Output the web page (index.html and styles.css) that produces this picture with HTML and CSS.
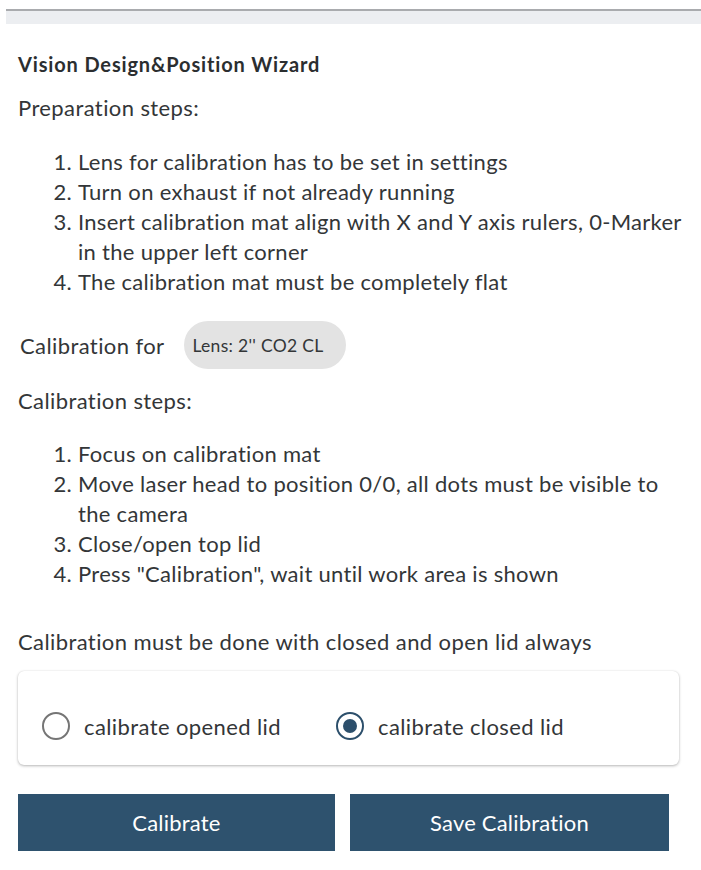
FILE: index.html
```html
<!DOCTYPE html>
<html>
<head>
<meta charset="utf-8">
<link rel="stylesheet" href="styles.css">
</head>
<body>
<div class="frame">
  <div class="band"></div>
  <div class="content">
    <h1 class="title">Vision Design&amp;Position Wizard</h1>
    <p class="section">Preparation steps:</p>
    <ol class="steps steps-prep">
      <li>Lens for calibration has to be set in settings</li>
      <li>Turn on exhaust if not already running</li>
      <li>Insert calibration mat align with X and Y axis rulers, <span class="nowrap">0-Marker</span> in the upper left corner</li>
      <li>The calibration mat must be completely flat</li>
    </ol>
    <div class="for-row">
      <span class="for-label">Calibration for</span>
      <span class="pill">Lens: 2'' CO2 CL</span>
    </div>
    <p class="section section-cal">Calibration steps:</p>
    <ol class="steps steps-cal">
      <li>Focus on calibration mat</li>
      <li>Move laser head to position 0/0, all dots must be visible to the camera</li>
      <li>Close/open top lid</li>
      <li>Press "Calibration", wait until work area is shown</li>
    </ol>
    <p class="note">Calibration must be done with closed and open lid always</p>
    <div class="card">
      <label class="radio">
        <span class="circle"></span>
        <span class="radio-text">calibrate opened lid</span>
      </label>
      <label class="radio radio-checked">
        <span class="circle"><span class="dot"></span></span>
        <span class="radio-text">calibrate closed lid</span>
      </label>
    </div>
    <div class="buttons">
      <button class="btn">Calibrate</button>
      <button class="btn">Save Calibration</button>
    </div>
  </div>
</div>
</body>
</html>
```
FILE: styles.css
```css
html, body {
  margin: 0;
  padding: 0;
  background: #ffffff;
}
body {
  font-family: "Lato", "Noto Sans", sans-serif;
  color: #333638;
  font-size: 22px;
  letter-spacing: 0.4px;
}
.frame {
  margin-top: 9px;
  margin-left: 6px;
  border-top: 2px solid #a9abae;
}
.band {
  height: 13px;
  background: #eceef1;
}
.content {
  margin-left: -6px;
  padding: 25px 22px 0 18px;
}
.title {
  margin: 0;
  font-size: 20px;
  font-weight: 700;
  letter-spacing: 0.85px;
  line-height: 30px;
  color: #2b2e30;
}
.section {
  margin: 14px 0 0 0;
  line-height: 30px;
}
.steps {
  margin: 24px -12px 0 0;
  padding-left: 60px;
  line-height: 30px;
  letter-spacing: 0.3px;
}
.nowrap {
  white-space: nowrap;
}
.for-row {
  margin-top: 24px;
  display: flex;
  align-items: center;
  height: 48px;
}
.for-label {
  padding-left: 2px;
}
.pill {
  margin-left: 20px;
  height: 48px;
  display: inline-flex;
  align-items: center;
  padding: 0 22px 0 8px;
  border-radius: 24px;
  background: #e3e3e3;
  font-size: 17.5px;
  letter-spacing: 0.3px;
}
.section-cal {
  margin-top: 17px;
}
.steps-cal {
  margin-top: 23px;
}
.note {
  margin: 38px 0 0 0;
  line-height: 30px;
}
.card {
  margin-top: 14px;
  height: 94px;
  box-sizing: border-box;
  padding: 41px 0 0 24px;
  border-radius: 6px;
  background: #fff;
  box-shadow: 0 1px 3px rgba(0, 0, 0, 0.28), 0 0 1px rgba(0, 0, 0, 0.12);
  display: flex;
}
.radio {
  display: flex;
  align-items: center;
  height: 28px;
}
.radio + .radio {
  margin-left: 55px;
}
.circle {
  width: 28px;
  height: 28px;
  box-sizing: border-box;
  border: 2.5px solid #757575;
  border-radius: 50%;
  display: flex;
  align-items: center;
  justify-content: center;
}
.radio-checked .circle {
  border-color: #2c4f6b;
}
.dot {
  width: 14px;
  height: 14px;
  border-radius: 50%;
  background: #2c4f6b;
}
.radio-text {
  margin-left: 14px;
}
.buttons {
  margin-top: 29px;
  margin-right: 10px;
  display: grid;
  grid-template-columns: 317px 319px;
  column-gap: 15px;
}
.btn {
  height: 57px;
  border: none;
  border-radius: 0;
  background: #2e526e;
  color: #ffffff;
  font-family: "Lato", "Noto Sans", sans-serif;
  font-size: 22px;
  letter-spacing: 0.2px;
  padding: 0;
}
```
